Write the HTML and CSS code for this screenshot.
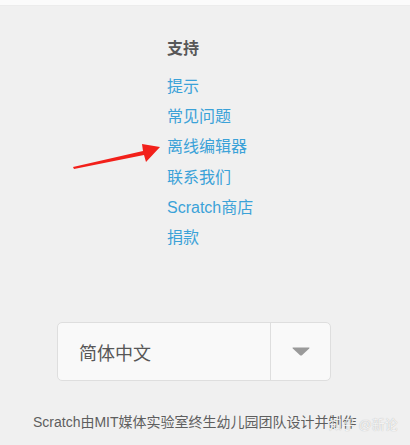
FILE: index.html
```html
<!DOCTYPE html>
<html>
<head>
<meta charset="utf-8">
<link rel="stylesheet" href="styles.css">
</head>
<body>
<div class="topbar"></div>
<main class="page">
  <section class="support">
    <h3 class="title">支持</h3>
    <ul class="links">
      <li><a href="#">提示</a></li>
      <li><a href="#">常见问题</a></li>
      <li><a href="#">离线编辑器</a></li>
      <li><a href="#">联系我们</a></li>
      <li><a href="#">Scratch商店</a></li>
      <li><a href="#">捐款</a></li>
    </ul>
  </section>
  <div class="select">
    <span class="select-label">简体中文</span>
    <span class="select-btn">
      <svg width="18" height="9" viewBox="0 0 18 9"><path d="M1 0.5 H17 Q18 0.5 17.2 1.4 L10 8.2 Q9 9 8 8.2 L0.8 1.4 Q0 0.5 1 0.5 Z" fill="#9a9a9a"/></svg>
    </span>
  </div>
  <p class="footer">Scratch由MIT媒体实验室终生幼儿园团队设计并制作</p>
</main>
<svg class="arrow" width="100" height="40" viewBox="0 0 100 40">
  <polygon points="3,31 73,15 72,8 90,11 76,26 74,19 4,33" fill="#f2201a"/>
</svg>
<span class="watermark">知乎 @新论</span>
</body>
</html>
```
FILE: styles.css
```css
html, body {
  margin: 0;
  padding: 0;
  background: #f0f0f0;
  width: 410px;
  height: 445px;
  overflow: hidden;
  font-family: "Liberation Sans", Arial, "Noto Sans CJK SC", sans-serif;
}
.topbar {
  height: 5px;
  background: #fbfbfb;
  border-bottom: 1px solid #ececec;
}
.page {
  display: flex;
  flex-direction: column;
  align-items: flex-start;
}
.support {
  margin-left: 167px;
  margin-top: 33px;
}
.title {
  margin: 0;
  font-size: 16px;
  font-weight: bold;
  color: #575757;
  line-height: 20px;
}
.links {
  list-style: none;
  margin: 18px 0 0;
  padding: 0;
}
.links li {
  height: 30.2px;
  line-height: 20px;
}
.links a {
  color: #3ba2d8;
  text-decoration: none;
  font-size: 16px;
}
.select {
  margin-left: 57px;
  margin-top: 64px;
  width: 274px;
  height: 59px;
  border: 1px solid #dedede;
  border-radius: 5px;
  background: #f9f9f9;
  display: flex;
  align-items: stretch;
  box-sizing: border-box;
}
.select-label {
  flex: 1;
  display: flex;
  align-items: center;
  padding-left: 21px;
  font-size: 18px;
  color: #575757;
}
.select-btn {
  width: 59px;
  border-left: 1px solid #dedede;
  display: flex;
  align-items: center;
  justify-content: center;
}
.footer {
  margin: 32px 0 0 33px;
  font-size: 14px;
  color: #5e5e5e;
  line-height: 18px;
  white-space: nowrap;
}
.arrow {
  position: absolute;
  left: 70px;
  top: 136px;
}
.watermark {
  position: absolute;
  left: 329px;
  top: 414px;
  font-size: 13px;
  color: rgba(255,255,255,0.85);
  text-shadow: 0 0 1px rgba(0,0,0,0.3);
  white-space: nowrap;
}
```
